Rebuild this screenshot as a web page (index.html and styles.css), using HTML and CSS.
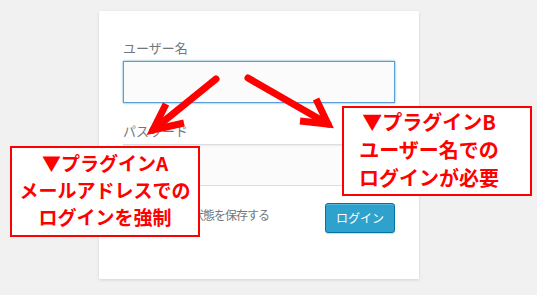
FILE: index.html
```html
<!DOCTYPE html>
<html lang="ja">
<head>
<meta charset="utf-8">
<title>ログイン</title>
<link rel="stylesheet" href="styles.css">
</head>
<body>
<div class="page">
  <form class="card">
    <label class="field-label" for="user">ユーザー名</label>
    <input class="field focus" id="user" type="text">
    <label class="field-label" for="pass">パスワード</label>
    <input class="field" id="pass" type="password">
    <div class="actions">
      <label class="remember"><span class="checkbox"></span>ログイン状態を保存する</label>
      <button class="btn" type="button">ログイン</button>
    </div>
  </form>

  <svg class="arrows" width="537" height="295" viewBox="0 0 537 295">
    <g fill="none" stroke="#ff0000" stroke-width="7">
      <path d="M216 79 L153 130" stroke-linecap="round"/>
      <path d="M166 104 L153 130 L184 123" stroke-linejoin="miter" stroke-miterlimit="10"/>
      <path d="M248 78 L328 124" stroke-linecap="round"/>
      <path d="M316 99 L328 124 L300 121" stroke-linejoin="miter" stroke-miterlimit="10"/>
    </g>
  </svg>

  <div class="callout callout-a">▼プラグインA<br>メールアドレスでの<br>ログインを強制</div>
  <div class="callout callout-b">▼プラグインB<br>ユーザー名での<br>ログインが必要</div>
</div>
</body>
</html>
```
FILE: styles.css
```css
html, body {
  margin: 0;
  padding: 0;
}
body {
  background: #f1f1f1;
  font-family: "Noto Sans CJK JP", "Noto Sans", sans-serif;
  width: 537px;
  height: 295px;
  overflow: hidden;
}
.page {
  position: relative;
  width: 537px;
  height: 295px;
  padding: 11px 0 0 99px;
  box-sizing: border-box;
}
.card {
  width: 320px;
  box-sizing: border-box;
  background: #fff;
  box-shadow: 0 1px 3px rgba(0, 0, 0, 0.13);
  padding: 26px 24px 46px;
  display: flex;
  flex-direction: column;
}
.field-label {
  font-size: 13px;
  line-height: 21px;
  color: #72777c;
}
.field {
  display: block;
  margin: 3px 0 17px;
  width: 272px;
  height: 42px;
  box-sizing: border-box;
  background: #fbfbfb;
  border: 1px solid #ddd;
  box-shadow: inset 0 1px 2px rgba(0, 0, 0, 0.07);
  padding: 3px;
  font-size: 20px;
  outline: none;
}
.field.focus {
  border-color: #5b9dd9;
  box-shadow: 0 0 2px rgba(30, 140, 190, 0.8);
}
.actions {
  display: flex;
  justify-content: space-between;
  align-items: flex-start;
}
.remember {
  display: flex;
  align-items: center;
  font-size: 12px;
  letter-spacing: -1px;
  line-height: 18px;
  color: #72777c;
  padding-top: 3px;
}
.checkbox {
  width: 16px;
  height: 16px;
  box-sizing: border-box;
  border: 1px solid #b4b9be;
  background: #fff;
  box-shadow: inset 0 1px 2px rgba(0, 0, 0, 0.1);
  margin-right: 9px;
}
.btn {
  width: 70px;
  height: 30px;
  box-sizing: border-box;
  background: #2ea2cc;
  border: 1px solid #0074a2;
  border-radius: 3px;
  box-shadow: inset 0 1px 0 rgba(120, 200, 230, 0.5), 0 1px 0 rgba(0, 0, 0, 0.15);
  color: #fff;
  font-family: "Noto Sans CJK JP", sans-serif;
  font-size: 12px;
  line-height: 28px;
  padding: 0;
}
.arrows {
  position: absolute;
  left: 0;
  top: 0;
}
.callout {
  position: absolute;
  box-sizing: border-box;
  background: #fff;
  border: 2px solid #ff0000;
  color: #ff0000;
  font-weight: bold;
  text-align: center;
}
.callout-a {
  left: 10px;
  top: 146px;
  width: 190px;
  height: 91px;
  font-size: 19px;
  line-height: 27px;
  padding-top: 1px;
}
.callout-b {
  left: 342px;
  top: 106px;
  width: 190px;
  height: 90px;
  font-size: 20px;
  line-height: 28px;
  padding: 0 16px 0 0;
}
```
